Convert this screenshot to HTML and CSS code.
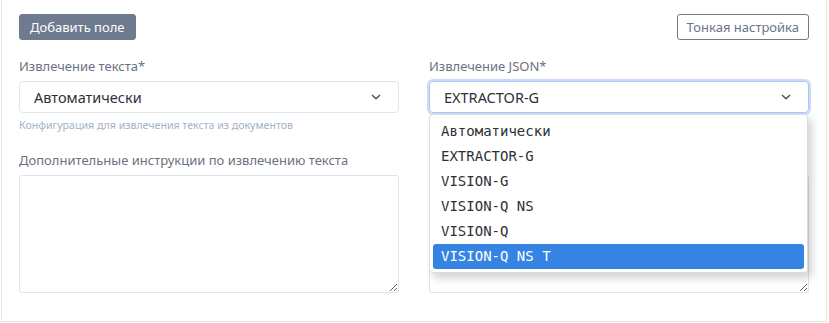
FILE: index.html
```html
<!DOCTYPE html>
<html lang="ru">
<head>
  <meta charset="UTF-8" />
  <title>Извлечение</title>
  <link rel="stylesheet" href="styles.css">
</head>
<body>
  <div class="card">
    <div class="toolbar">
      <button class="btn btn-solid">Добавить поле</button>
      <button class="btn btn-outline">Тонкая настройка</button>
    </div>

    <div class="columns">
      <div class="column">
        <label class="label">Извлечение текста*</label>
        <div class="select">
          <span>Автоматически</span>
          <svg class="chevron" width="10" height="6" viewBox="0 0 10 6"><path d="M1 1 L5 4.8 L9 1" /></svg>
        </div>
        <div class="help">Конфигурация для извлечения текста из документов</div>
        <label class="label label-gap">Дополнительные инструкции по извлечению текста</label>
        <textarea class="textarea"></textarea>
      </div>

      <div class="column">
        <label class="label">Извлечение JSON*</label>
        <div class="select-wrap">
          <div class="select focused">
            <span>EXTRACTOR-G</span>
            <svg class="chevron" width="10" height="6" viewBox="0 0 10 6"><path d="M1 1 L5 4.8 L9 1" /></svg>
          </div>
          <ul class="dropdown">
            <li>Автоматически</li>
            <li>EXTRACTOR-G</li>
            <li>VISION-G</li>
            <li>VISION-Q NS</li>
            <li>VISION-Q</li>
            <li class="active">VISION-Q NS T</li>
          </ul>
        </div>
        <!-- help and label of this column sit under the open list -->
        <div class="help-spacer"></div>
        <div class="label-spacer"></div>
        <textarea class="textarea"></textarea>
      </div>
    </div>
  </div>
</body>
</html>
```

FILE: styles.css
```css
body {
  margin: 0;
  background: #fff;
  font-family: 'Noto Sans', sans-serif;
}

.card {
  margin: 0 2px 0 1px;
  padding: 14px 17px 28px 17px;
  border: 1px solid #e2e2e2;
  border-top: none;
  background: #fff;
}

.toolbar {
  display: flex;
  justify-content: space-between;
  align-items: center;
}

.btn {
  font-family: 'Noto Sans', sans-serif;
  font-size: 13px;
  height: 26px;
  padding: 0 10px;
  border-radius: 3px;
  cursor: pointer;
}

.btn-solid {
  background: #6e7a8e;
  border: 1px solid #6e7a8e;
  color: #fff;
}

.btn-outline {
  background: #fff;
  border: 1px solid #707a8c;
  color: #6b7486;
  padding: 0 9px;
}

.columns {
  display: grid;
  grid-template-columns: 1fr 1fr;
  column-gap: 30px;
  margin-top: 17px;
}

.column {
  display: flex;
  flex-direction: column;
}

.label {
  font-size: 13px;
  line-height: 18px;
  color: #6b7180;
  margin-bottom: 6px;
}

.label-gap {
  margin-top: 18px;
}

.help-spacer {
  height: 20px;
}

.label-spacer {
  height: 24px;
  margin-top: 18px;
}

.select-wrap {
  position: relative;
}

.select {
  height: 32px;
  box-sizing: border-box;
  border: 1px solid #e1e5ea;
  border-radius: 4px;
  display: flex;
  align-items: center;
  justify-content: space-between;
  padding: 0 17px 0 14px;
  font-size: 14.5px;
  color: #2d3039;
}

.select.focused {
  border-color: #a9c7f3;
  box-shadow: 0 0 0 2px #cadcf8;
}

.chevron path {
  fill: none;
  stroke: #4a5363;
  stroke-width: 1.5;
}

.help {
  font-size: 10.6px;
  line-height: 15px;
  margin-top: 5px;
  color: #a3b2c4;
}

.textarea {
  height: 118px;
  box-sizing: border-box;
  border: 1px solid #dfe4ea;
  border-radius: 3px;
  resize: both;
  font-family: 'Noto Sans', sans-serif;
}

.dropdown {
  position: absolute;
  top: 33px;
  left: 0;
  right: 1px;
  margin: 0;
  padding: 4px 3px 3px 3px;
  list-style: none;
  background: #fff;
  border: 1px solid #dcdcdc;
  border-radius: 4px;
  box-shadow: 4px 5px 8px rgba(0, 0, 0, 0.18);
  z-index: 10;
}

.dropdown li {
  height: 25px;
  line-height: 25px;
  padding: 0 8px;
  font-family: 'DejaVu Sans Mono', monospace;
  font-size: 14px;
  color: #2e3036;
  border-radius: 3px;
}

.dropdown li.active {
  background: #3584e4;
  color: #fff;
}
```
